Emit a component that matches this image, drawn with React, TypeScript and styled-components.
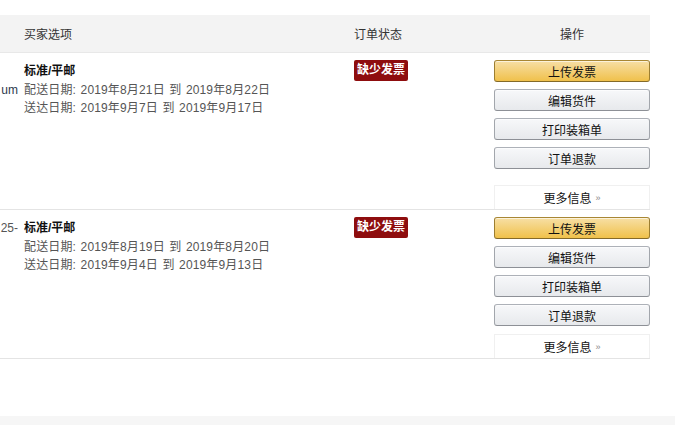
import React from 'react';
import styled, { createGlobalStyle } from 'styled-components';

const GlobalStyle = createGlobalStyle`
  html, body {
    margin: 0;
    padding: 0;
    background: #fff;
  }
  body {
    font-family: "Liberation Sans", "Noto Sans CJK SC", sans-serif;
    font-size: 12px;
    color: #111;
  }
`;

const Page = styled.div`
  width: 675px;
  height: 425px;
  display: flex;
  flex-direction: column;
  overflow: hidden;
`;

const Table = styled.div`
  width: 650px;
  margin-top: 15px;
`;

const HeaderRow = styled.div`
  display: grid;
  grid-template-columns: 20px 334px 140px 156px;
  height: 38px;
  align-items: center;
  background: #f3f3f3;
  border-bottom: 1px solid #e8e8e8;
  box-sizing: border-box;
  color: #333;
`;

const HeadCell = styled.div<{ $center?: boolean; $indent?: number }>`
  padding-left: ${p => p.$indent ?? 0}px;
  text-align: ${p => (p.$center ? 'center' : 'left')};
`;

const OrderRow = styled.div`
  display: grid;
  grid-template-columns: 20px 334px 140px 156px;
  padding-top: 7px;
  border-bottom: 1px solid #e4e4e4;
`;

const ClipCell = styled.div<{ $color: string; $line: number }>`
  padding-top: ${p => 2 + p.$line * 18.5}px;
  text-align: right;
  padding-right: 2px;
  white-space: nowrap;
  line-height: 18.5px;
  color: ${p => p.$color};
`;

const Options = styled.div`
  padding: 2px 0 0 4px;
  line-height: 18.5px;
`;

const Method = styled.div`
  font-weight: bold;
  color: #111;
`;

const DateLine = styled.div`
  color: #555;
  white-space: nowrap;
  letter-spacing: 0.15px;
  word-spacing: 1px;
`;

const StatusCell = styled.div``;

const Badge = styled.span`
  display: inline-block;
  background: #8e0d0e;
  color: #fff;
  font-weight: bold;
  line-height: 21px;
  padding: 0 3px;
  border-radius: 2px;
`;

const Actions = styled.div<{ $moreGap: number }>`
  display: flex;
  flex-direction: column;
  gap: 7px;
  & > :last-child {
    margin-top: ${p => p.$moreGap - 7}px;
  }
`;

const ActionButton = styled.button<{ $primary?: boolean }>`
  height: 22px;
  width: 156px;
  margin: 0;
  padding: 0;
  font: inherit;
  color: #111;
  border-radius: 3px;
  border: 1px solid;
  border-color: ${p => (p.$primary ? '#a88734 #9c7e31 #846a29' : '#adb1b8 #a2a6ac #8d9096')};
  background: ${p =>
    p.$primary
      ? 'linear-gradient(to bottom, #f7dfa5, #f0c14b)'
      : 'linear-gradient(to bottom, #f7f8fa, #e7e9ec)'};
  box-shadow: 0 1px 0 rgba(255, 255, 255, 0.6) inset;
  cursor: pointer;
`;

const MoreBox = styled.div`
  height: 24px;
  box-sizing: border-box;
  border: 1px solid #f0f0f0;
  border-bottom: none;
  display: flex;
  align-items: center;
  justify-content: center;
  gap: 4px;
  color: #111;
`;

const Arrow = styled.span`
  font-size: 9px;
  color: #888;
`;

const Spacer = styled.div`
  flex: 1;
`;

const FootBand = styled.div`
  height: 9px;
  background: #f6f6f6;
`;

type Order = {
  clip: string;
  clipColor: string;
  clipLine: number;
  ship: string;
  arrive: string;
  moreGap: number;
};

const orders: Order[] = [
  {
    clip: 'um',
    clipColor: '#2b3a4d',
    clipLine: 1,
    ship: '配送日期: 2019年8月21日 到 2019年8月22日',
    arrive: '送达日期: 2019年9月7日 到 2019年9月17日',
    moreGap: 16,
  },
  {
    clip: '25-',
    clipColor: '#555',
    clipLine: 0,
    ship: '配送日期: 2019年8月19日 到 2019年8月20日',
    arrive: '送达日期: 2019年9月4日 到 2019年9月13日',
    moreGap: 8,
  },
];

const actions = ['编辑货件', '打印装箱单', '订单退款'];

const App: React.FC = () => {
  return (
    <Page>
      <GlobalStyle />
      <Table>
        <HeaderRow>
          <HeadCell />
          <HeadCell $indent={4}>买家选项</HeadCell>
          <HeadCell>订单状态</HeadCell>
          <HeadCell $center>操作</HeadCell>
        </HeaderRow>
        {orders.map((o, i) => (
          <OrderRow key={i}>
            <ClipCell $color={o.clipColor} $line={o.clipLine}>
              {o.clip}
            </ClipCell>
            <Options>
              <Method>标准/平邮</Method>
              <DateLine>{o.ship}</DateLine>
              <DateLine>{o.arrive}</DateLine>
            </Options>
            <StatusCell>
              <Badge>缺少发票</Badge>
            </StatusCell>
            <Actions $moreGap={o.moreGap}>
              <ActionButton $primary>上传发票</ActionButton>
              {actions.map(a => (
                <ActionButton key={a}>{a}</ActionButton>
              ))}
              <MoreBox>
                更多信息<Arrow>»</Arrow>
              </MoreBox>
            </Actions>
          </OrderRow>
        ))}
      </Table>
      <Spacer />
      <FootBand />
    </Page>
  );
};

export default App;
